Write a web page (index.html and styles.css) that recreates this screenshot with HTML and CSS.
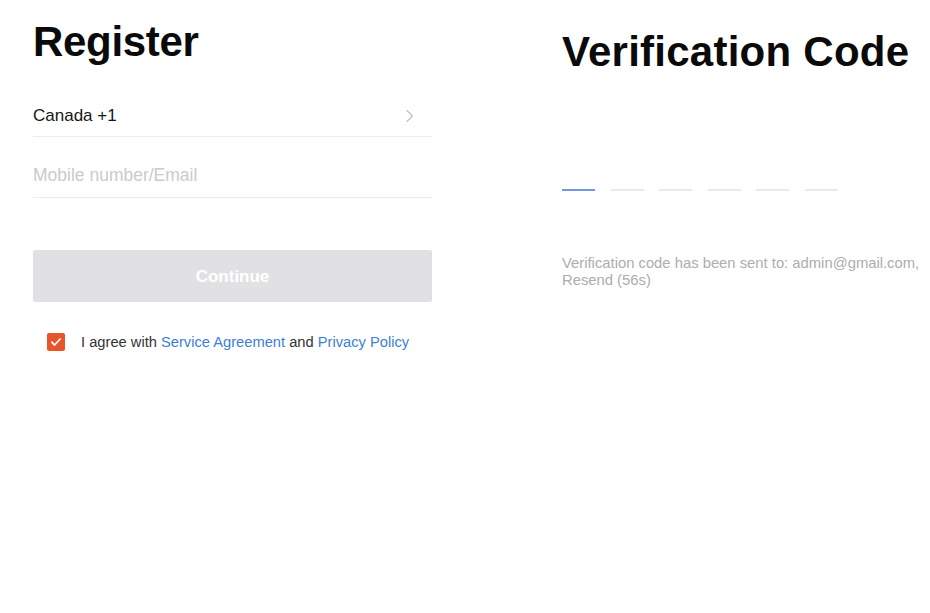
FILE: index.html
```html
<!DOCTYPE html>
<html lang="en">
<head>
<meta charset="utf-8">
<title>Register</title>
<link rel="stylesheet" href="styles.css">
</head>
<body>
<div class="page">
  <section class="left">
    <h1 class="title">Register</h1>
    <div class="row country">
      <span>Canada +1</span>
      <svg class="chev" width="10" height="14" viewBox="0 0 10 14"><path d="M2 1.5 L7.5 7 L2 12.5" fill="none" stroke="#c4c4c4" stroke-width="1.4" stroke-linecap="round" stroke-linejoin="round"/></svg>
    </div>
    <div class="row field">
      <span class="placeholder">Mobile number/Email</span>
    </div>
    <button class="continue">Continue</button>
    <div class="agree">
      <span class="check">
        <svg width="12" height="10" viewBox="0 0 12 10"><path d="M1.8 5.2 L4.6 8 L10.2 2" fill="none" stroke="#fff" stroke-width="1.8" stroke-linecap="round" stroke-linejoin="round"/></svg>
      </span>
      <span class="agree-text">I agree with <a class="link">Service Agreement</a> and <a class="link">Privacy Policy</a></span>
    </div>
  </section>
  <section class="right">
    <h1 class="title title-right">Verification Code</h1>
    <div class="dashes">
      <span class="dash active"></span>
      <span class="dash"></span>
      <span class="dash"></span>
      <span class="dash"></span>
      <span class="dash"></span>
      <span class="dash"></span>
    </div>
    <p class="sent">Verification code has been sent to: admin@gmail.com,<br>Resend (56s)</p>
  </section>
</div>
</body>
</html>
```
FILE: styles.css
```css
* { box-sizing: border-box; }
html, body {
  margin: 0;
  padding: 0;
  background: #fff;
  font-family: "Liberation Sans", Arial, sans-serif;
  color: #111;
}
.page {
  display: flex;
  padding-left: 33px;
  width: 930px;
  height: 613px;
}
.left {
  width: 399px;
  flex: none;
}
.right {
  margin-left: 130px;
  flex: 1;
}
.title {
  margin: 18px 0 0;
  font-size: 42px;
  line-height: 48px;
  font-weight: 700;
  color: #0a0a0a;
  letter-spacing: -0.3px;
}
.title-right {
  margin-top: 28px;
  letter-spacing: 0.25px;
}
.row {
  display: flex;
  align-items: center;
  justify-content: space-between;
  border-bottom: 1px solid #ececec;
  font-size: 17px;
  line-height: 20px;
}
.country {
  margin-top: 40px;
  padding-bottom: 10px;
  color: #161616;
}
.chev {
  margin-right: 17px;
}
.field {
  padding-top: 28px;
  padding-bottom: 12px;
}
.placeholder {
  color: #cbcbcb;
  font-size: 17.5px;
}
.continue {
  display: block;
  width: 100%;
  height: 52px;
  margin-top: 52px;
  padding-top: 2px;
  border: none;
  border-radius: 2px;
  background: #e1e1e3;
  color: #fff;
  font-family: "Liberation Sans", Arial, sans-serif;
  font-size: 17px;
  font-weight: 700;
}
.agree {
  display: flex;
  align-items: center;
  margin-top: 31px;
  padding-left: 14px;
  height: 18px;
}
.check {
  width: 18px;
  height: 18px;
  border-radius: 2px;
  background: #e8542b;
  display: flex;
  align-items: center;
  justify-content: center;
  flex: none;
}
.agree-text {
  margin-left: 16px;
  font-size: 14.7px;
  color: #333;
  white-space: nowrap;
}
.link {
  color: #3c7fd4;
}
.dashes {
  display: flex;
  gap: 15.6px;
  margin-top: 113px;
}
.dash {
  width: 33px;
  height: 2px;
  background: #e9e9e9;
}
.dash.active {
  background: #7098dc;
}
.sent {
  margin: 64px 0 0;
  font-size: 14.8px;
  line-height: 17px;
  color: #adadad;
  white-space: nowrap;
}
```
